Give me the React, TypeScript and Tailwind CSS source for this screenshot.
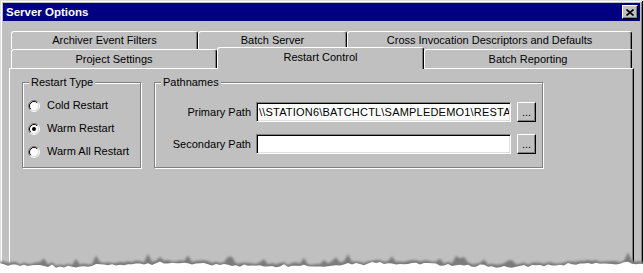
import clsx from "clsx";

const tabBase =
  "flex items-center justify-center bg-[#c0c0c0] border-t border-l border-white border-r border-r-black rounded-t-[3px] shadow-[inset_-1px_0_0_#808080] text-[11px] leading-[13px] text-black whitespace-nowrap";

const Tab = ({ label, className }: { label: string; className: string }) => (
  <div className={clsx(tabBase, className)}>{label}</div>
);

const Radio = ({ checked = false }: { checked?: boolean }) => (
  <svg width="12" height="12" viewBox="0 0 12 12" className="shrink-0">
    <circle cx="6" cy="6" r="4.5" fill="#fff" />
    <path d="M2.11 9.89 A5.5 5.5 0 0 1 9.89 2.11" stroke="#808080" fill="none" />
    <path d="M9.89 2.11 A5.5 5.5 0 0 1 2.11 9.89" stroke="#fff" fill="none" />
    <path d="M2.82 9.18 A4.5 4.5 0 0 1 9.18 2.82" stroke="#000" fill="none" />
    <path d="M9.18 2.82 A4.5 4.5 0 0 1 2.82 9.18" stroke="#dfdfdf" fill="none" />
    {checked && <circle cx="6" cy="6" r="2" fill="#000" />}
  </svg>
);

const GroupBox = ({
  label,
  className,
  children,
}: {
  label: string;
  className: string;
  children: React.ReactNode;
}) => (
  <div
    className={clsx(
      "relative h-[86px] border border-[#808080] shadow-[inset_1px_1px_0_#fff,1px_1px_0_#fff]",
      className
    )}
  >
    <span className="absolute -top-[7px] left-[6px] bg-[#c0c0c0] px-[2px] text-[11px] leading-[13px]">
      {label}
    </span>
    {children}
  </div>
);

const PathRow = ({ label, value }: { label: string; value?: string }) => (
  <div className="flex items-center h-[20px]">
    <div className="w-[96px] text-right text-[11px] leading-[13px]">{label}</div>
    <div className="ml-[5px] w-[255px] h-[20px] flex items-center bg-white border border-t-[#808080] border-l-[#808080] border-b-white border-r-white shadow-[inset_1px_1px_0_#000,inset_-1px_-1px_0_#dfdfdf] pl-[2px] pr-[1px]">
      <span className="block w-full overflow-hidden text-[11px] leading-[13px] tracking-[0.2px] whitespace-nowrap">
        {value}
      </span>
    </div>
    <div className="ml-[6px] w-[19px] h-[20px] flex items-center justify-center bg-[#c0c0c0] border border-t-white border-l-white border-b-black border-r-black shadow-[inset_-1px_-1px_0_#808080] text-[11px] leading-[13px]">
      ...
    </div>
  </div>
);

// torn paper edge along the bottom of the screenshot
let seed = 11;
const rnd = () => {
  seed = (seed * 16807) % 2147483647;
  return seed / 2147483647;
};
const tearPts = Array.from({ length: 162 }, (_, i) => {
  const x = i * 4;
  const base = 20 + Math.sin(i / 9) * 1.5 + (rnd() - 0.5) * 2.5;
  const peak = rnd() < 0.12 ? 3 + rnd() * 5 : rnd() * 1.2;
  return { x, base, peak };
});
const shadowD =
  "M0 30 " + tearPts.map((p) => `L${p.x} ${(p.base - p.peak).toFixed(1)}`).join(" ") + " L643 30 Z";
const whiteD =
  "M0 30 " +
  tearPts.map((p) => `L${p.x} ${(p.base + 1 + rnd() * 1.5).toFixed(1)}`).join(" ") +
  " L643 30 Z";

const TornEdge = () => (
  <svg width="643" height="30" viewBox="0 0 643 30" className="absolute left-0 bottom-0">
    <defs>
      <filter id="blur" x="-5%" y="-50%" width="110%" height="200%">
        <feGaussianBlur stdDeviation="0.9" />
      </filter>
    </defs>
    <path d={shadowD} fill="#7a7a7a" filter="url(#blur)" />
    <path d={whiteD} fill="#fff" />
  </svg>
);

export default function App() {
  return (
    <div className="relative w-[643px] h-[273px] overflow-hidden bg-white font-['Liberation_Sans',Arial,sans-serif] text-black">
      <div className="w-[643px] h-[300px] bg-[#c0c0c0] p-[3px] shadow-[inset_1px_1px_0_#dfdfdf,inset_-1px_-1px_0_#000,inset_2px_2px_0_#fff,inset_-2px_-2px_0_#808080]">
        {/* title bar */}
        <div className="h-[18px] flex items-center justify-between bg-[#000080] pl-[3px] pr-[2px]">
          <span className="text-white font-bold text-[11.5px] leading-[14px]">Server Options</span>
          <div className="w-[16px] h-[14px] flex items-center justify-center bg-[#c0c0c0] border border-t-white border-l-white border-b-black border-r-black shadow-[inset_-1px_-1px_0_#808080]">
            <svg width="8" height="7" viewBox="0 0 8 7">
              <path d="M0.5 0.5 L7.5 6.5 M7.5 0.5 L0.5 6.5" stroke="#000" strokeWidth="1.6" />
            </svg>
          </div>
        </div>

        <div className="pt-[10px] pl-[6px]">
          {/* back row of tabs */}
          <div className="flex h-[18px] pl-[2px]">
            <Tab label="Archiver Event Filters" className="w-[187px] h-[18px]" />
            <Tab label="Batch Server" className="w-[149px] h-[18px]" />
            <Tab label="Cross Invocation Descriptors and Defaults" className="w-[285px] h-[18px]" />
          </div>
          {/* front row of tabs */}
          <div className="relative z-10 flex items-start h-[19px] pl-[2px]">
            <Tab label="Project Settings" className="w-[206px] h-[19px]" />
            <Tab label="Restart Control" className="w-[207px] h-[22px] -mt-[2px] pb-[3px]" />
            <Tab label="Batch Reporting" className="w-[208px] h-[19px]" />
          </div>

          {/* tab page */}
          <div className="flex items-start w-[625px] h-[220px] border-t border-l border-white border-r border-r-black shadow-[inset_-1px_0_0_#808080] pt-[13px] pl-[12px]">
            <GroupBox label="Restart Type" className="w-[119px]">
              <div className="flex flex-col pt-[11px] pl-[5px] text-[11px] leading-[13px]">
                <div className="flex items-center h-[23px]">
                  <Radio />
                  <span className="ml-[7px]">Cold Restart</span>
                </div>
                <div className="flex items-center h-[23px]">
                  <Radio checked />
                  <span className="ml-[7px]">Warm Restart</span>
                </div>
                <div className="flex items-center h-[23px]">
                  <Radio />
                  <span className="ml-[7px]">Warm All Restart</span>
                </div>
              </div>
            </GroupBox>

            <GroupBox label="Pathnames" className="ml-[13px] w-[389px]">
              <div className="flex flex-col gap-[12px] pt-[19px]">
                <PathRow label="Primary Path" value="\\STATION6\BATCHCTL\SAMPLEDEMO1\RESTA" />
                <PathRow label="Secondary Path" />
              </div>
            </GroupBox>
          </div>
        </div>
      </div>
      <TornEdge />
    </div>
  );
}
